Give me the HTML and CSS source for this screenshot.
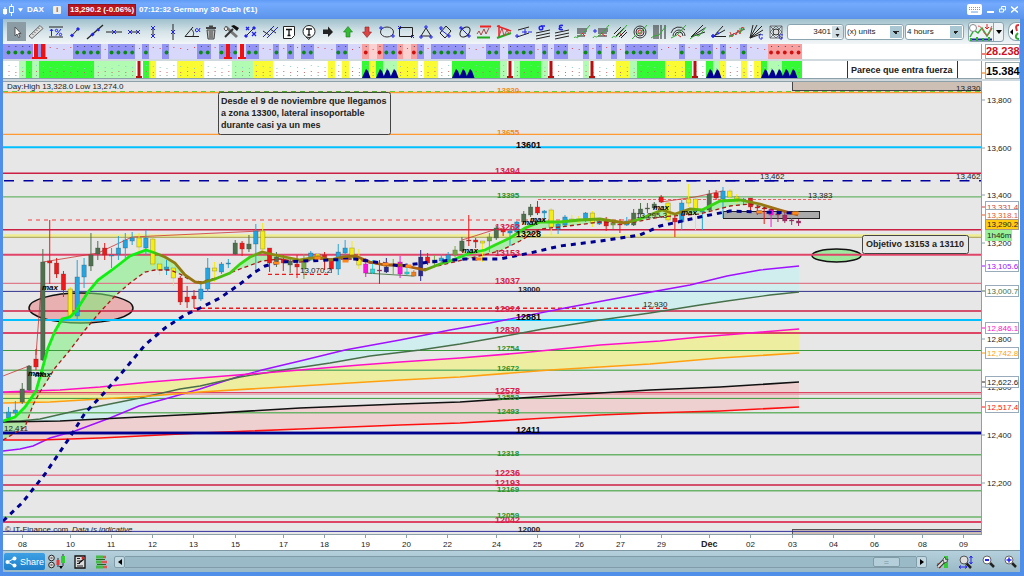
FILE: index.html
```html
<!DOCTYPE html>
<html lang="en">
<head>
<meta charset="utf-8">
<title>DAX - Germany 30 Cash</title>
<link rel="stylesheet" href="styles.css">
</head>
<body>
<header class="titlebar">
  <svg class="logo" viewBox="0 0 12 14"><path d="M2 4v8M8.500 1v12" stroke="#fff"/><path d="M0 6h4v5H0z" fill="#fff"/><path d="M6.500 3.500h4v6h-4z" fill="#5f9af2" stroke="#fff"/></svg>
  <svg class="caret" viewBox="0 0 6 4"><path d="M0 0h6L3 4z" fill="#fff"/></svg>
  <b class="symbol">DAX</b>
  <button class="info" aria-label="Information">i</button>
  <b class="quote">13,290.2 (-0.06%)</b>
  <b class="clock">07:12:32 Germany 30 Cash (€1)</b>
  <div class="window-buttons">
    <button aria-label="Keyboard"><svg width="15" height="11" viewBox="0 0 15 11"><rect width="15" height="11" rx="2" fill="#fff"/><path d="M2 3.500h11M2 5.500h11" stroke="#6a9ce8" stroke-dasharray="1 1"/><path d="M4 8h7" stroke="#6a9ce8"/></svg></button>
    <button aria-label="Minimise"><svg width="7" height="9" viewBox="0 0 7 9"><path d="M0 7h7" stroke="#fff" stroke-width="2"/></svg></button>
    <button aria-label="Restore"><svg width="7" height="9" viewBox="0 0 7 9"><path d="M.5 4h4v3h-4zM2.500 4V1.500h4V5h-2" fill="none" stroke="#fff"/></svg></button>
    <button aria-label="Close"><svg width="7" height="9" viewBox="0 0 7 9"><path d="M0 1.500l7 6M7 1.500l-7 6" stroke="#fff" stroke-width="1.500"/></svg></button>
  </div>
</header>

<div class="toolbar">
  <div class="tools">
    <button class="active" aria-label="Pointer"><svg viewBox="0 0 18 16"><path d="M7 3v9l2-2 1.500 3.500 1.500-.7L10.500 9.500H13z" fill="#fff" stroke="#555"/></svg></button>
    <button aria-label="Ruler"><svg viewBox="0 0 18 16"><path d="M2 12L13 1.500l3 3L5 14.500z" fill="#ddd" stroke="#666"/><path d="M5 9.500l1.500 1.500M7 7.500L8.500 9M9 5.500l1.500 1.500M11 3.500L12.500 5" stroke="#666"/></svg></button>
    <button aria-label="Percent"><svg viewBox="0 0 18 16"><path d="M2 3h14M2 13h14" stroke="#222"/><path d="M4.500 12V5M3 7l1.500-2L6 7M9 11.500L14 5" stroke="#22e" fill="none"/><circle cx="9.500" cy="6.500" r="1.200" fill="none" stroke="#22e"/><circle cx="13.500" cy="10.500" r="1.200" fill="none" stroke="#22e"/></svg></button>
    <button aria-label="Segment"><svg viewBox="0 0 18 16"><path d="M6 11.500L12 5" stroke="#222"/><path d="M5 12.500l2-2M11 6l2-2" stroke="#22e" stroke-width="3"/></svg></button>
    <button aria-label="Line"><svg viewBox="0 0 18 16"><path d="M1 15L17 1" stroke="#222" stroke-width="1.300"/><path d="M5.500 11.500l2-2M11.500 6.500l1.500-1.500" stroke="#22e" stroke-width="3"/></svg></button>
    <button aria-label="Horizontal line"><svg viewBox="0 0 18 16"><path d="M1 8h16" stroke="#222"/><path d="M7 6l4 4M11 6l-4 4" stroke="#22e"/></svg></button>
    <button aria-label="Horizontal segment"><svg viewBox="0 0 18 16"><path d="M4 8h10" stroke="#222"/><path d="M3 6l4 4M7 6l-4 4M11 6l4 4M15 6l-4 4" stroke="#22e"/></svg></button>
    <button aria-label="Vertical segment"><svg viewBox="0 0 18 16"><path d="M9 3v10" stroke="#222"/><path d="M7 2l4 4M11 2L7 6M7 10l4 4M11 10l-4 4" stroke="#22e"/></svg></button>
    <button aria-label="Vertical line"><svg viewBox="0 0 18 16"><path d="M9 0v16" stroke="#222"/><path d="M7 6l4 4M11 6l-4 4" stroke="#22e"/></svg></button>
    <button aria-label="Angle"><svg viewBox="0 0 18 16"><path d="M10 3L2 12.500h14M8 5c3 2 3 5 2 7" fill="none" stroke="#222"/><path d="M17 4c-1 4-5 5-4.500 2s3-1 4.500 2" fill="none" stroke="#22e"/></svg></button>
    <button aria-label="Delete"><svg viewBox="0 0 18 16"><path d="M4 4h10M7 2.500h4" stroke="#444" stroke-width="2"/><path d="M5 6h8l-1 9H6z" fill="#bbb" stroke="#444"/><path d="M8 7v7M10 7v7" stroke="#444"/></svg></button>
    <button aria-label="Settings"><svg viewBox="0 0 18 16"><path d="M4 3l11 10" stroke="#777" stroke-width="3"/><path d="M3 13l8-8" stroke="#333" stroke-width="2"/><path d="M9 2l6 5 2-3-5-3z" fill="#111"/><path d="M2 5l2-3 2 3-2 2z" fill="#eee" stroke="#555"/></svg></button>
    <button aria-label="Half line"><svg viewBox="0 0 18 16"><path d="M4 13L14 3" stroke="#222"/><path d="M5 3l3 3M8 3L5 6M11 8l4 4M15 8l-4 4" stroke="#22e" stroke-width="1.300"/><path d="M4 13l2-2M12 5l2-2" stroke="#22e" stroke-width="3"/></svg></button>
    <button aria-label="Channel"><svg viewBox="0 0 18 16"><path d="M2 13L13 2M6 14L17 3" stroke="#22e"/><path d="M2 7l6 4M9 5l6 4" stroke="#222"/></svg></button>
    <button aria-label="Text"><svg viewBox="0 0 18 16"><path d="M3.500 2.500h11v9l-3 3h-8z" fill="#fff" stroke="#222"/><path d="M6 5.500h6M9 5.500v6M7.500 11.500h3" stroke="#111" stroke-width="1.300"/></svg></button>
    <button aria-label="Callout"><svg viewBox="0 0 18 16"><path d="M6 13l3 2.500 2-3" fill="#fff" stroke="#222"/><circle cx="9" cy="7.500" r="6" fill="#fff" stroke="#222"/><path d="M6 5h6M9 5v6M7.500 11h3" stroke="#111" stroke-width="1.300"/></svg></button>
    <button aria-label="Right arrow"><svg viewBox="0 0 18 16"><path d="M4 5.500h5v-3L14 8l-5 5v-3H4z" fill="#222"/></svg></button>
    <button aria-label="Up arrow"><svg viewBox="0 0 18 16"><path d="M9 2.500L13.500 8H11v5H7V8H4.500z" fill="#3b3" stroke="#272" stroke-width=".6"/></svg></button>
    <button aria-label="Down arrow"><svg viewBox="0 0 18 16"><path d="M9 13.500L4.500 8H7V3h4v5h2.500z" fill="#d44" stroke="#822" stroke-width=".6"/></svg></button>
    <button aria-label="Ellipse"><svg viewBox="0 0 18 16"><ellipse cx="9" cy="8" rx="6.500" ry="5" fill="none" stroke="#333"/><path d="M1 4h4M3 2v4M13 12h4M15 10v4" stroke="#22e"/></svg></button>
    <button aria-label="Rectangle"><svg viewBox="0 0 18 16"><path d="M2.500 3.500h13v9h-13z" fill="none" stroke="#222"/><path d="M1 2l3 3M4 2L1 5M14 11l3 3M17 11l-3 3" stroke="#22e"/></svg></button>
    <button aria-label="Triangle"><svg viewBox="0 0 18 16"><path d="M9 4l5 8H4z" fill="none" stroke="#222"/><path d="M9 1v4M7 3h4M2 13h4M4 11v4M12 13h4M14 11v4" stroke="#22e"/></svg></button>
    <button aria-label="Rotated rectangle"><svg viewBox="0 0 18 16"><path d="M10 2l5 5-6 7-5-5z" fill="none" stroke="#222"/><path d="M3 4h4M5 2v4M4 5l9 7M11 12h4M13 10v4" stroke="#22e"/></svg></button>
    <button aria-label="Rotated ellipse"><svg viewBox="0 0 18 16"><ellipse cx="9" cy="8" rx="6" ry="4" transform="rotate(-45 9 8)" fill="none" stroke="#222"/><path d="M3 4h4M5 2v4M4 3l9 9M11 12h4M13 10v4" stroke="#22e"/></svg></button>
    <button aria-label="Support and resistance"><svg viewBox="0 0 18 16"><path d="M5 2.500h11" stroke="#e22" stroke-width="2"/><path d="M2 13.500h13" stroke="#2a2" stroke-width="2"/><path d="M2 10l2-3 2 4 3-6 2 5 3-6" fill="none" stroke="#a44"/></svg></button>
    <button aria-label="Wedge"><svg viewBox="0 0 18 16"><path d="M2 2l14 5M4 1v13" stroke="#e22" stroke-width="1.500"/><path d="M2 14l14-5" stroke="#2a2" stroke-width="2"/><path d="M4 12l3-8 2 8 3-6 2 4" fill="none" stroke="#c44"/></svg></button>
    <button aria-label="Parallel"><svg viewBox="0 0 18 16"><path d="M4 6l11-3M3 13l12-4" stroke="#222"/><path d="M1 12h4M3 10v4M8 8h5M11 5v6M14 8h4" stroke="#22e"/></svg></button>
    <button aria-label="Standard deviation"><svg viewBox="0 0 18 16"><path d="M2 9l14-3M2 12l14-3M2 15l14-3" stroke="#222"/><circle cx="7" cy="4" r="1.800" fill="none" stroke="#22e" stroke-width="1.500"/><path d="M7 2h4" stroke="#22e" stroke-width="1.500"/></svg></button>
    <button aria-label="Standard error"><svg viewBox="0 0 18 16"><path d="M2 9l14-3M2 12l14-3M2 15l14-3" stroke="#222"/><path d="M10 1.500c-5-1-4 2-1 2-4 0-4 3 1 2" fill="none" stroke="#22e" stroke-width="1.500"/></svg></button>
    <button aria-label="Retracement"><svg viewBox="0 0 18 16"><path d="M4 5h10M4 7h10M4 9h9M4 12h8" stroke="#222"/><path d="M1 14c2-3 3 2 5-2l3-2 3-3 5-6" fill="none" stroke="#3a3"/><path d="M9 9l3 3" stroke="#d22"/></svg></button>
    <button aria-label="Projection"><svg viewBox="0 0 18 16"><path d="M6 5h10M6 7h10M6 9h9M6 12h9" stroke="#222"/><path d="M1 14c2-4 3 1 5-2l3-2 3-3 5-6" fill="none" stroke="#3a3"/><path d="M1 7h4M3 5v4" stroke="#22e"/><path d="M9 9l4 3" stroke="#d22"/></svg></button>
    <button aria-label="Fibonacci channel"><svg viewBox="0 0 18 16"><path d="M3 10l7-7M5 12l8-8M8 13l7-7M10 14l6-6" stroke="#222"/><path d="M1 14c2-4 3 1 5-2l4-4 6-7" fill="none" stroke="#3a3"/><path d="M8 8l3 4" stroke="#d22"/></svg></button>
    <button aria-label="Fibonacci circles"><svg viewBox="0 0 18 16"><circle cx="9" cy="8" r="6" fill="none" stroke="#333"/><circle cx="9" cy="8" r="4" fill="none" stroke="#333"/><circle cx="9" cy="8" r="2" fill="none" stroke="#d22"/><path d="M1 15l4-4 5-3 6-7" fill="none" stroke="#3a3"/></svg></button>
    <button aria-label="Time zones"><svg viewBox="0 0 18 16"><path d="M4 1v14M6 1v14M8 1v14M11 1v14M15 1v14" stroke="#222"/><path d="M1 14l3-2 5-1 7-9" fill="none" stroke="#3a3"/></svg></button>
    <button aria-label="Fibonacci arcs"><svg viewBox="0 0 18 16"><path d="M3 12a6 6 0 0 1 12 0M5 12a4 4 0 0 1 8 0M1 9a8 8 0 0 1 14-3" fill="none" stroke="#333"/><path d="M1 14l6-3 9-10" fill="none" stroke="#3a3"/><path d="M8 11l3 2" stroke="#d22"/></svg></button>
    <button aria-label="Fibonacci fan"><svg viewBox="0 0 18 16"><path d="M2 13L14 1M2 13L16 4M2 13l14-5" stroke="#222"/><path d="M1 15l5-4 4 1 7-9" fill="none" stroke="#3a3"/></svg></button>
    <button aria-label="Speed lines"><svg viewBox="0 0 18 16"><path d="M5 12L14 2M5 12l11-6M3 12.500h14" stroke="#222"/><path d="M2 12h4M4 10v4M8 8l2 2" stroke="#22e" stroke-width="1.500"/></svg></button>
    <button aria-label="Waves"><svg viewBox="0 0 18 16"><path d="M1 12l16-7" stroke="#555"/><path d="M2 8l2 5 2-4 2 2 2-5 2 4 2-7 2 2" fill="none" stroke="#d33"/><path d="M1 13l5-2M12 4v5l4-6" fill="none" stroke="#3a3"/></svg></button>
    <button aria-label="Gann fan"><svg viewBox="0 0 18 16"><path d="M2 14L5 1M2 14L9 1M2 14L14 2M2 14l13-8M2 14l11-4" stroke="#222"/><path d="M15 11c-5-2-5 5-1 4v-2" fill="none" stroke="#22e"/></svg></button>
    <button aria-label="Gann square"><svg viewBox="0 0 18 16"><path d="M3 2h12v12H3zM3 2l12 12M15 2L3 14M9 2l6 6-6 6-6-6z" fill="none" stroke="#555" stroke-width=".8"/><circle cx="9" cy="8" r="3" fill="#ddd" stroke="#333"/><path d="M16 11c-5-2-5 5-1 4v-2" fill="none" stroke="#22e"/></svg></button>
  </div>
  <div class="spin"><input type="text" value="3401" aria-label="Number of units"><svg viewBox="0 0 6 12"><path d="M1 4h4L3 1zM1 8h4L3 11z" fill="#222"/></svg></div>
  <select aria-label="Units"><option>(x) units</option></select>
  <select aria-label="Timeframe"><option>4 hours</option></select>
  <div class="split">
    <button aria-label="Indicators"><svg width="24" height="18" viewBox="0 0 24 18"><path d="M1 14l4-7 4 3 4-5 5 8 5-8" fill="none" stroke="#3a3" stroke-width="1.500"/><path d="M9 3c5 0 5 9 9 9 3 0 3-7 5-9" fill="none" stroke="#d55"/><circle cx="4" cy="5" r="3.500" fill="#fff" stroke="#888"/><path d="M18 1v4M16 4l2 2 2-2" stroke="#d22" fill="none"/><path d="M1 16.500h22" stroke="#22a" stroke-width="2"/><path d="M2 15v3M8 14v4M14 15v3M20 14v4" stroke="#2b2" stroke-width="2"/></svg></button>
    <button class="drop" aria-label="More indicators"><svg width="6" height="4" viewBox="0 0 6 4"><path d="M0 0h6L3 4z"/></svg></button>
  </div>
  <button class="round" aria-label="Orders"><svg width="10" height="18" viewBox="0 0 10 18"><path d="M3 6L0 9l3 3z"/><path d="M9 2C5 2 6 5 7 8" fill="none" stroke="#d33" stroke-width="2"/><path d="M9 16c-4 0-4-3-1-6" fill="none" stroke="#3a3" stroke-width="2"/></svg></button>
</div>

<main class="panels">
  <svg id="strip-a" viewBox="3 44 1017 15" role="img" aria-label="Trend strip"></svg>
  <svg id="strip-b" viewBox="3 61 1017 18" role="img" aria-label="Strength strip"></svg>
  <svg id="chart" viewBox="3 81 1017 469" role="img" aria-label="DAX price chart"></svg>
</main>

<footer class="bottombar">
  <button class="share"><svg width="12" height="12" viewBox="0 0 12 12"><path d="M10 2L2.500 6 10 10" fill="none" stroke="#fff"/><circle cx="2.500" cy="6" r="2" fill="#fff"/><circle cx="9.500" cy="2.500" r="2" fill="#fff"/><circle cx="9.500" cy="9.500" r="2" fill="#fff"/></svg>Share</button>
  <button class="bare" aria-label="Chart style"><svg width="17" height="15" viewBox="0 0 17 15"><circle cx="3.500" cy="4" r="2.800" fill="#ddd" stroke="#222"/><circle cx="3.500" cy="11" r="2.800" fill="#ddd" stroke="#222"/><path d="M2.500 4h2M2.500 11h2" stroke="#222"/><path d="M10 4v9M15 0v12" stroke="#333"/><path d="M8.500 6h3v5h-3z" fill="#e33"/><path d="M13 2h4v7h-4z" fill="#3c3"/><path d="M11 12h4l-2 3z"/></svg></button>
  <button class="bare" aria-label="Report"><svg width="12" height="14" viewBox="0 0 12 14"><path d="M1 1h10v12H1z" fill="#ddd" stroke="#111" stroke-width="1.300"/><path d="M3 3.500h3M3 6h5M3 8.500h3M3 11h6" stroke="#222"/><path d="M5 8l5-4" stroke="#111" stroke-width="1.500"/><circle cx="9" cy="3" r="1.500" fill="#d22"/></svg></button>
  <button class="bare" aria-label="Order book"><svg width="13" height="14" viewBox="0 0 13 14"><path d="M1 2h7M1 7h6M1 12h7" stroke="#4b4" stroke-width="3"/><path d="M8 2h3M7 7h5M8 12h4" stroke="#d55" stroke-width="2.500"/><path d="M1 4.500h9M2 9.500h9" stroke="#262"/></svg></button>
  <div class="scroll">
    <button aria-label="Scroll left"><svg width="4" height="6" viewBox="0 0 4 6"><path d="M4 0v6L0 3z"/></svg></button>
    <div class="track"><div class="thumb">=</div></div>
    <button aria-label="Scroll right"><svg width="4" height="6" viewBox="0 0 4 6"><path d="M0 0v6l4-3z"/></svg></button>
  </div>
  <button class="bare" aria-label="Chart settings"><svg width="13" height="14" viewBox="0 0 13 14"><path d="M8 1h4v12H8z" fill="#3c3"/><path d="M1 8h4v5H1z" fill="#d66"/><path d="M2 12l6-6" stroke="#333" stroke-width="4"/><path d="M2 12l6-6" stroke="#ddd" stroke-width="2"/><path d="M7 4l2-2 1 3 2-1-1 3-3 1z" fill="#ddd" stroke="#333" stroke-width=".7"/></svg></button>
  <button class="bare" aria-label="Fit zoom"><svg width="15" height="14" viewBox="0 0 15 14"><path d="M8 8l5 5" stroke="#222" stroke-width="2.500"/><circle cx="6" cy="5" r="4" fill="#ddd" stroke="#555"/><path d="M13 1v8M11.500 3L13 1l1.500 2M11.500 7L13 9l1.500-2M1 12h8M3 10.500L1 12l2 1.500M7 10.500L9 12l-2 1.500" fill="none" stroke="#22e"/></svg></button>
  <button class="bare" aria-label="Zoom out"><svg width="13" height="13" viewBox="0 0 13 13"><path d="M8 8l4 4" stroke="#222" stroke-width="2.500"/><circle cx="5" cy="5" r="4" fill="#fff" stroke="#666"/><path d="M3 5h4" stroke="#22e" stroke-width="2"/></svg></button>
  <button class="bare" aria-label="Zoom in"><svg width="13" height="13" viewBox="0 0 13 13"><path d="M8 8l4 4" stroke="#222" stroke-width="2.500"/><circle cx="5" cy="5" r="4" fill="#fff" stroke="#666"/><path d="M2.500 5h5M5 2.500v5" stroke="#22e" stroke-width="1.500"/></svg></button>
</footer>
<script src="chart.js"></script>
</body>
</html>
```

FILE: styles.css
```css
* { box-sizing: border-box; }

body {
  margin: 0;
  height: 100vh;
  padding: 0 4px 4px 3px;
  display: flex;
  flex-direction: column;
  overflow: hidden;
  background: #4f8fea;
  font-family: "Liberation Sans", Arial, sans-serif;
  font-size: 9px;
  color: #222;
}

button {
  padding: 0;
  border: 0;
  background: none;
  font: inherit;
  display: flex;
  align-items: center;
  justify-content: center;
}

.titlebar {
  flex: none;
  height: 19px;
  display: flex;
  align-items: center;
  background: linear-gradient(#5f9bf5, #74aafd 20%, #5a94ea);
  margin: 0 -4px 0 -3px;
  padding: 0 6px 0 3px;
  color: #fff;
  font-size: 8px;
}
.logo { width: 12px; height: 14px; }
.caret { width: 5px; height: 4px; margin: 0 4px 0 3px; }
.symbol { width: 26px; }
.info {
  width: 8px;
  height: 8px;
  border-radius: 1px;
  background: #eee;
  color: #667;
  font-weight: bold;
  margin-right: 7px;
}
.quote {
  background: #bb1620;
  border: 1px solid #8f1420;
  line-height: 10px;
  padding: 0 1px;
  margin-right: 3px;
  white-space: nowrap;
}
.clock { flex: 1; white-space: nowrap; }
.window-buttons { display: flex; gap: 5px; }

.toolbar {
  flex: none;
  height: 25px;
  display: flex;
  align-items: center;
  gap: 1px;
  padding-left: 4px;
  background: linear-gradient(#9fbfcc, #d4e3e8 50%, #f2f6f7);
}
.tools {
  flex: 1;
  min-width: 0;
  display: grid;
  grid-template-columns: repeat(40, minmax(0, 1fr));
}
.tools button { height: 19px; }
.tools svg { width: 18px; height: 16px; }
.tools .active { background: #8b9ca5; }

.spin {
  width: 57px;
  height: 16px;
  display: flex;
  align-items: center;
  background: #fff;
  border: 1px solid #8aa5b0;
  border-radius: 3px;
}
.spin input {
  width: 43px;
  border: 0;
  padding: 0;
  background: none;
  text-align: right;
  font: inherit;
  font-size: 8px;
  color: #222;
}
.spin svg { width: 11px; height: 12px; background: #cfdde3; margin-left: 1px; }

.toolbar select {
  width: 59px;
  height: 16px;
  padding: 0 0 0 1px;
  appearance: none;
  font: inherit;
  font-size: 8px;
  color: #222;
  border: 1px solid #8aa5b0;
  border-radius: 3px;
  background:
    linear-gradient(to bottom left, #222 50%, transparent 50%) right 7px top 6px / 3px 3px no-repeat,
    linear-gradient(to bottom right, #222 50%, transparent 50%) right 4px top 6px / 3px 3px no-repeat,
    linear-gradient(#a9c6d3, #a9c6d3) right 1px top 1px / 12px 12px no-repeat,
    #fff;
}
.split {
  display: flex;
  height: 20px;
  margin: 0 3px;
  background: #eef4f6;
  border: 1px solid #8aa5b0;
  border-radius: 3px;
}
.split .drop { width: 10px; border-left: 1px solid #8aa5b0; }
.round {
  width: 12px;
  height: 19px;
  background: #fff;
  border: 1px solid #8aa5b0;
  border-right: 0;
  border-radius: 8px 0 0 8px;
}

.panels {
  flex: 1;
  min-height: 0;
  display: flex;
  flex-direction: column;
  gap: 2px;
  background: #cfd9de;
}
.panels svg { display: block; width: 100%; background: #fff; }
#strip-a, #strip-b { flex: none; }
#chart { flex: 1; min-height: 0; }

.panels text { font-size: 8px; fill: #222; }
.panels .bold { font-size: 9px; font-weight: bold; }
.panels .small-bold { font-weight: bold; }
.panels .value { font-size: 11px; font-weight: bold; }
.panels .max { font-weight: bold; font-style: italic; fill: #000; }
.panels .italic { font-style: italic; }

.bottombar {
  flex: none;
  height: 22px;
  display: flex;
  align-items: center;
  gap: 9px;
  padding: 0 3px 0 1px;
  border-top: 1px solid #7f97a1;
  background: linear-gradient(#b5d0dc, #9ab9c6);
}
.share {
  width: 41px;
  height: 17px;
  gap: 3px;
  color: #fff;
  background: linear-gradient(#3da0e4, #1f7fc9);
  border-radius: 2px;
  margin-right: -6px;
}
.scroll { flex: 1; display: flex; align-items: center; height: 12px; margin: 0 -3px; }
.scroll button {
  width: 11px;
  height: 12px;
  background: #c3d9e2;
  border: 1px solid #809ca8;
  border-radius: 2px;
}
.track {
  flex: 1;
  height: 12px;
  padding-right: 16px;
  display: flex;
  justify-content: flex-end;
  background: #9bbac7;
  border: solid #809ca8;
  border-width: 1px 0;
}
.thumb {
  width: 27px;
  line-height: 9px;
  text-align: center;
  color: #7793a0;
  background: #b4cfda;
  border: 1px solid #809ca8;
  border-radius: 2px;
}
.scroll + .bare { margin-left: 3px; }
```

FILE: chart.js
```js
const stripA = [], stripB = [], chart = [];
const STEP = 6.87, FIRST = 8.5;

const rect = (x, y, w, h, fill, extra = "") =>
  `<rect x="${x}" y="${y}" width="${w}" height="${h}" fill="${fill}" ${extra}/>`;
const line = (x1, y1, x2, y2, stroke, w = 1, dash = "") =>
  `<line x1="${x1}" y1="${y1}" x2="${x2}" y2="${y2}" stroke="${stroke}" stroke-width="${w}" stroke-dasharray="${dash}"/>`;
const text = (x, y, s, cls = "", fill = "") =>
  `<text x="${x}" y="${y}" class="${cls}"${fill ? ` style="fill:${fill}"` : ""}>${s}</text>`;
const poly = (pts, stroke, w, dash = "") =>
  `<polyline points="${pts}" fill="none" stroke="${stroke}" stroke-width="${w}" stroke-dasharray="${dash}"/>`;
const band = (a, b, fill) =>
  `<polygon points="${a} ${b.split(" ").reverse().join(" ")}" fill="${fill}"/>`;

// Trend strip: D strong, P falling, L weak falling; the rest is neutral.
const trend = `3-33D 38-46D 73-101D 108-135D 142-149D 162-169D 197-211D 219-237D 246-259D 273-279D 287-294D 301-314D 336-348D
362-369P 369-377L 377-383P 383-397D 397-403P 403-411L 411-417P 417-424D 431-466D 486-500D 508-535D 542-548D 554-568D 583-589D
596-602D 611-617D 625-658D 679-685D 700-713D 720-726D 740-747D 768-802P`.split(/\s+/);
stripA.push(rect(3, 44, 799, 15, "#d8d8fb"));
const trendCells = trend.map(c => { const [, a, b, t] = c.match(/(\d+)-(\d+)(\w)/); return [+a, +b, t]; });
for (const [a, b, t] of trendCells) {
  stripA.push(rect(a, 44, b - a, 15, { D: "#9494f5", P: "#f8a0a0", L: "#fbd0d0" }[t]));
}
for (let i = 0; i < 116; i++) {
  const x = FIRST + STEP * i;
  const cell = trendCells.find(c => x >= c[0] && x <= c[1]);
  if (cell && cell[2] !== "L") {
    stripA.push(`<circle cx="${x}" cy="52.500" r="1.900" fill="${cell[2] === "D" ? "#0a8a14" : "#d01010"}"/>`);
    stripA.push(rect(x, 46, 1, 1, "#445"));
  } else {
    stripA.push(rect(x, 47 + i % 3, 1, 1, "#e04050"));
  }
}
for (const x of [36, 43, 228, 242]) {
  stripA.push(rect(x - 2, 44, 4, 14, "#f01010"), rect(x - 4, 57, 8, 2, "#f01010"));
}
stripA.push(rect(981, 44, 1, 15, "#8ca0aa"), line(982, 54, 985, 54, "#d00"),
  rect(985.5, 44.5, 34, 14, "#fff", 'stroke="#9aa"'), text(986, 55, "28.238", "value", "#d01020"));

// Strength strip: G strong, S soft green, Y yellow.
const strength = `19-26S 26-32G 32-39S 39-94G 94-136S 143-149G 149-156Y 177-204Y 232-253S 253-273Y 328-335Y 342-349Y 362-369G
369-376Y 376-383G 383-397S 397-418Y 424-438Y 452-500G 500-507S 514-520S 520-541G 541-548S 583-589S 616-630Y 630-637S 637-665G
665-685Y 685-692G 706-713G 713-720S 720-726Y 741-747Y 754-761Y 761-767G 767-782S 782-802G`.split(/\s+/);
for (const c of strength) {
  const [, a, b, t] = c.match(/(\d+)-(\d+)(\w)/);
  stripB.push(rect(a, 61, b - a, 17, { G: "#33fa33", S: "#b2fbb2", Y: "#fbfb33" }[t]));
}
for (let i = 0; i < 116; i++) {
  const x = FIRST + STEP * i;
  stripB.push(rect(x, 65 + i % 4, 1, 1, "#8cc"), rect(x, 71 + i % 2, 1, 1, "#c66"), rect(x, 75, 1, 1, "#8a8"));
}
for (const [x, n] of [[362, 1], [376, 3], [452, 3], [706, 2], [761, 5]]) {
  for (let k = 0; k < n; k++) {
    const l = x + k * 7;
    stripB.push(`<path d="M${l} 78l4-9 2 2 2.500 7z" fill="#000090"/>`);
  }
}
for (const x of [139, 510, 551, 592, 695]) {
  stripB.push(rect(x - 1.5, 61, 3, 16, "#b81010"), rect(x - 3, 76, 6, 2, "#b81010"));
}
stripB.push(rect(3, 78, 979, 1, "#8ca0aa"), line(847.5, 61, 847.5, 78, "#333"), line(957.5, 61, 957.5, 78, "#333"),
  text(851, 73, "Parece que entra fuerza", "bold"), rect(981, 61, 1, 17, "#8ca0aa"),
  line(982, 73, 985, 73, "#e70"), rect(985.5, 62.5, 34, 16, "#fff", 'stroke="#9aa"'), text(986, 75, "15.384", "value", "#000"));

// Chart background and future zones
chart.push(rect(3, 81, 978, 453, "#e7e7e7"));
chart.push(rect(792.5, 80.5, 189, 10, "#cdbfb3", 'stroke="#444"'), rect(792.5, 529.5, 189, 5, "#cdbfb3", 'stroke="#555"'));

const purple = "3,451 20,449 33,446 50,438 75,431 110,418 139,406 165,399 200,389 240,376 262,370 300,361 345,350 400,340 450,330 490,323 565,308 640,294 690,285 727,276 760,270 799,266";
const forest = "3,421 20,421 40,419 75,411 100,406 140,398 180,389 200,386 240,377 283,370 330,363 370,356 420,350 460,344 500,337 543,329 600,320 650,313 700,305 727,301 770,295 799,292";
const magenta = "3,392 60,390 100,387 150,382 200,378 250,374 300,370 360,365 400,362 460,358 520,353 600,345 660,341 700,337 750,333 799,329";
const orange = "3,403 50,402 100,399 150,396 200,392 300,386 400,380 460,377 550,370 650,364 720,358 799,353";
const black = "3,422 60,421 120,418 200,414 300,408 400,404 460,402 520,398 600,393 650,390 720,387 799,382";
const red = "3,440 40,440 100,438 200,433 300,429 400,425 460,423 600,415 650,413 720,411 799,407";
const fast = "3,421 15,417 25,407 36,391 42,370 48,348 55,331 62,319 70,317 76,311 88,292 98,280 112,270 130,256 146,250 155,253 165,257 175,263 185,275 195,282 201,283 215,279 230,273 240,264 250,257 262,252 275,255 290,258 300,260 318,257 330,260 343,257 355,256 370,262 385,265 400,265 415,268 425,270 440,264 450,261 470,253 485,250 495,245 510,238 525,228 540,222 560,222 580,220 600,219 625,223 640,219 662,210 675,214 690,209 702,210 720,201 740,200 760,204 780,210 798,215";
const slow = "3,440 25,427 33,405 40,392 55,368 70,350 85,330 100,312 115,296 130,283 145,272 155,270 170,270 180,274 190,280 201,282 220,277 240,269 262,261 280,259 300,262 320,259 355,259 370,263 400,266 425,269 450,263 500,251 520,241 540,229 560,227 600,222 630,223 660,217 700,214 730,206 750,204 770,209 798,215";
const trail = "3,521 22,503 45,474 70,437 85,413 105,392 120,375 130,363 145,345 165,328 185,315 200,308 220,298 240,284 255,272 265,266 280,262 330,260 355,259 400,266 430,262 465,259 500,259 530,253 560,246 600,241 640,235 660,226 700,217 730,211 760,212 796,213";

chart.push(band(purple, forest, "#cfeeed"), band(magenta, orange, "#eeeea0"), band(black, red, "#efd0d0"));
chart.push(rect(723.5, 211.5, 96, 7, "#aaa", 'stroke="#222"'));
chart.push(`<ellipse cx="81" cy="308" rx="52" ry="15" fill="#e8b0b0" stroke="#111" stroke-width="1.500"/>`);
chart.push(`<g opacity=".55">${band(fast, slow, "#7cf07c")}</g>`);
chart.push(`<ellipse cx="836.500" cy="255.500" rx="24.500" ry="6.500" fill="#a0e8a0" stroke="#111" stroke-width="1.500"/>`);

const levels = [
  [92.5, "#f93", 1.5], [134.3, "#f93", 1.3], [147.3, "#00bfff", 2], [173.3, "#cc1f44", 1.5], [196.8, "#6ab46a", 1.3],
  [229.7, "#cc1f44", 1.5], [235.5, "#eeee90", 2.5], [237.3, "#a8a048", 1], [254.8, "#e04468", 2], [283.3, "#de7c8c", 1.3],
  [291.4, "#33338f", 1], [311, "#cc1f44", 1.4], [320, "#00bfff", 2.2], [333, "#dd4466", 2], [350.5, "#3a9a3a", 1],
  [370.2, "#6ab46a", 1.4], [392.5, "#e04464", 1.2], [394, "#de7c8c", 1.2], [398.4, "#3a9a3a", 1], [412.7, "#6ab46a", 1.4],
  [433, "#00008f", 2.3], [454.8, "#6ab46a", 1.4], [475.2, "#e27c90", 1.4], [485, "#cc1f44", 1.4], [490.8, "#6ab46a", 1.4],
  [517, "#6ab46a", 1.4], [522, "#dd4466", 2], [531.4, "#33339f", 1]
];
for (const [y, color, w] of levels) chart.push(line(3, y, 981, y, color, w));
chart.push(line(3, 91.5, 981, 91.5, "#6c3", 1, "5 4"));
chart.push(line(4, 180.8, 981, 180.8, "#0000a0", 1.5, "10 9.500"), line(355, 180.8, 787, 180.8, "#0000a0", 1.5, "14 5.500"));
chart.push(line(28, 220, 640, 220, "#f43c3c", 1.2, "4 4"), line(538, 199.5, 833, 199.5, "#f46060", 1, "3 2"));
chart.push(line(194, 308.3, 668, 308.3, "#f01818", 1.6, "4 3"), line(268, 274.4, 331, 274.4, "#f01818", 1.3, "4 3"));

chart.push(poly(purple, "#a010ff", 1.4), poly(forest, "#47704a", 1.4), poly(magenta, "#ff10c8", 1.6),
  poly(orange, "#ffa010", 1.6), poly(black, "#111", 1.6), poly(red, "#ff1010", 1.6));
chart.push(line(3, 433, 981, 433, "#00008f", 2.3));
chart.push(poly("3,376 29,366", "#c33", 0.8), poly("36,355 43,262 98,253 132,237 260,231", "#c33", 0.8),
  poly("462,240 500,228", "#c33", 0.8), poly("661,202 695,197 723,191", "#c33", 0.8), poly("365,273 413,276", "#363", 0.8));

// Candles: high, body top, body bottom, low, colour key
const colors = { b: "#22a5e0", g: "#4f704f", r: "#f01818", y: "#f5ee10", l: "#77a844", m: "#ff10e0", n: "#282890", c: "#20dddd", w: "#b02868", o: "#f08020" };
const candles = `407,412,418,420,b 401,410,413,417,b 383,389,402,404,g 365,366,390,391,g 349,359,367,370,r 249,262,360,361,g
220,261,263,284,r 258,263,274,278,r 271,274,290,297,r 287,289,316,317,y 260,277,316,320,b 258,265,277,288,b 233,255,266,271,g
241,248,254,260,g 243,248,255,260,r 248,255,256,268,b 236,248,254,260,b 233,240,248,258,b 232,238,241,245,b 233,238,247,252,y
230,238,248,255,b 238,239,264,266,y 259,264,270,275,y 260,267,270,275,b 262,268,278,286,y 276,278,302,305,r 286,297,302,308,r
290,296,299,308,r 283,289,299,301,b 258,268,289,292,b 262,268,271,282,y 262,264,272,274,b 259,263,264,268,b 240,243,254,255,g
241,243,249,256,r 235,244,249,252,g 224,231,244,273,b 223,231,249,251,y 248,248,263,272,r 252,257,262,267,g 255,259,263,271,r
257,261,265,273,g 255,264,267,278,r 254,261,269,279,l 251,253,259,261,b 253,254,256,260,y 252,255,259,270,r 258,260,269,273,r
244,252,269,275,b 240,248,253,257,b 241,248,255,258,y 249,257,265,269,y 258,264,273,277,m 260,269,273,274,c 260,270,271,284,w
258,267,272,273,n 259,264,266,274,l 256,262,274,278,m 268,272,274,275,c 270,272,276,277,o 250,257,276,281,n 253,257,263,265,r
255,260,263,265,l 254,258,261,263,b 252,255,260,262,b 246,250,255,257,l 237,241,251,252,g 215,240,241,246,r 238,240,242,248,r
241,241,243,262,y 233,237,241,252,l 226,228,238,240,g 227,229,232,236,r 228,231,233,246,b 221,222,232,234,b 211,214,222,224,g
204,207,215,217,g 201,207,213,215,r 210,211,213,220,b 208,210,227,235,y 221,224,229,234,b 215,217,225,227,b 215,219,220,224,y
216,219,220,223,y 212,213,219,222,b 211,213,223,227,y 218,221,224,225,b 217,220,226,231,r 221,223,225,229,l 219,224,225,233,r
217,221,225,226,b 209,213,225,226,g 203,209,214,220,g 203,208,209,213,g 202,204,208,209,g 195,197,202,203,r 202,203,220,222,y
216,218,222,237,r 200,203,222,230,b 184,199,203,207,y 198,199,210,230,y 210,211,212,230,b 190,194,210,211,g 190,193,198,200,r
187,191,199,218,b 189,191,197,200,y 194,197,199,203,y 198,199,201,204,b 198,198,207,211,r 206,207,208,215,r 205,208,209,224,r
206,209,215,227,m 211,214,215,222,w 212,215,221,223,w 218,220,221,225,w 219,221,223,226,w`.split(/\s+/);
candles.forEach((c, i) => {
  const [hi, top, bottom, lo, key] = c.split(",");
  const x = FIRST + STEP * i, h = Math.max(bottom - top, 1);
  chart.push(line(x, hi, x, lo, colors[key], 1));
  chart.push(rect(x - 2.2, top, 4.4, h, colors[key], 'stroke="#333" stroke-opacity=".35" stroke-width=".7"'));
});

// Moving averages; the fast one changes colour with its slope.
const stops = [[3, "#10f010"], [150, "#10f010"], [162, "#8a8010"], [200, "#987010"], [215, "#50b010"], [245, "#30e010"], [262, "#888810"],
  [300, "#909010"], [370, "#a06010"], [420, "#b06010"], [430, "#60a010"], [455, "#20e818"], [560, "#40d010"], [600, "#70a010"], [625, "#a07010"],
  [640, "#40d010"], [670, "#988010"], [688, "#888810"], [705, "#30e010"], [735, "#40c810"], [755, "#908010"], [798, "#b05818"]];
chart.push(`<defs><linearGradient id="slope" gradientUnits="userSpaceOnUse" x1="3" y1="0" x2="798" y2="0">${
  stops.map(([x, c]) => `<stop offset="${(x - 3) / 795}" stop-color="${c}"/>`).join("")}</linearGradient></defs>`);
chart.push(poly(slow, "#a81818", 1.3, "4 3"), poly(fast, "url(#slope)", 2.8), poly(trail, "#000090", 3, "5 5"));
for (const [x, y] of [[276, 263], [317, 258], [345, 261], [385, 264], [408, 266], [478, 259], [759, 212], [795, 213]]) {
  chart.push(rect(x - 2.5, y - 1.5, 6, 3, "#ff8818"));
}

// Level labels
const crimson = "#d8204a", green = "#2a8f2a";
for (const [y, s] of [[174, 13494], [230, 13262], [256, 13153], [284, 13037], [312, 12924], [333, 12830], [394, 12578], [476, 12236], [486, 12193], [523, 12042]])
  chart.push(text(495, y, s, "bold", crimson));
for (const [y, s] of [[198, 13395], [351, 12754], [371, 12672], [400, 12553], [414, 12493], [456, 12318], [492, 12169], [518, 12059]])
  chart.push(text(497, y, s, "small-bold", green));
for (const [y, s] of [[93, 13830], [135, 13655]]) chart.push(text(497, y, s, "small-bold", "#f08a20"));
for (const [y, s] of [[148, 13601], [237, 13228], [320, 12881], [433, 12411]]) chart.push(text(516, y, s, "bold", "#000"));
for (const [y, s] of [[292, 13000], [532, 12000]]) chart.push(text(518, y, s, "small-bold", "#222"));
for (const [x, y, s] of [[300, 273, "13,070.2"], [643, 307, "12,930"], [760, 179, "13,462"], [956, 179, "13,462"], [808, 198, "13,383"],
  [956, 91, "13,830"], [636, 218, "13,295.3"], [4, 431, "12,411"], [7, 89, "Day:High 13,328.0 Low 13,274.0"]])
  chart.push(text(x, y, s));
for (const [x, y] of [[42, 290], [28, 376], [35, 377], [462, 253], [522, 225], [530, 222], [653, 210], [681, 215]])
  chart.push(text(x, y, "max", "max"));
chart.push(text(5, 532, "© IT-Finance.com"), text(72, 532, "Data is indicative", "italic"));

// Notes
chart.push(rect(218.5, 92.5, 172, 42, "#e7e7e7", 'rx="2" stroke="#444"'), line(219, 92, 390, 92, "#3a7a2a", 1, "5 4"));
["Desde el 9 de noviembre que llegamos", "a zona 13300, lateral insoportable", "durante casi ya un mes"]
  .forEach((s, i) => chart.push(text(221, 104 + 12 * i, s, "bold")));
chart.push(rect(862.5, 235.5, 106, 18, "#e7e7e7", 'rx="2" stroke="#444"'), text(866, 247, "Objetivo 13153 a 13110", "bold"));

// Axes
chart.push(rect(981, 81, 39, 469, "#fff"), rect(3, 534, 1017, 16, "#fff"));
chart.push(rect(3, 81, 979, 1, "#8ca0aa"), rect(981, 81, 1, 454, "#8ca0aa"), rect(3, 534, 979, 1, "#8ca0aa"));
for (const [y, s] of [[100, "13,800"], [148, "13,600"], [195, "13,400"], [243, "13,200"], [339, "12,800"], [387, "12,600"], [435, "12,400"], [483, "12,200"]])
  chart.push(line(982, y, 985, y, "#8ca0aa"), text(987, y + 3, s));
for (const [y, s, color] of [[207, "13,331.4", "#c44"], [215, "13,318.1", "#e05a30"], [266, "13,105.6", "#a010ff"], [291, "13,000.7", "#47704a"],
  [328, "12,846.1", "#ff10c8"], [353, "12,742.8", "#ffa010"], [382, "12,622.6", "#222"], [407, "12,517.4", "#ff1010"]])
  chart.push(line(982, y, 985, y, color), rect(985.5, y - 5.5, 33, 11, "#fff", 'stroke="#9ab"'), text(987, y + 3, s, "", color));
chart.push(rect(985.5, 219.5, 33, 10, "#ffcc10", 'stroke="#a98"'), text(987, 227, "13,290.2"));
chart.push(rect(985, 230, 27, 11, "#98f098"), text(987, 238, "1h46m"));
for (const [x, s] of [[22, "08"], [70, "10"], [111, "11"], [152, "12"], [193, "13"], [235, "15"], [283, "17"], [324, "18"], [365, "19"], [406, "20"],
  [447, "22"], [496, "24"], [537, "25"], [579, "26"], [620, "27"], [661, "29"], [709, "Dec"], [750, "02"], [792, "03"], [833, "04"], [874, "06"], [922, "08"], [963, "09"]])
  chart.push(line(x + .5, 535, x + .5, 538, "#8ca0aa"), text(s === "Dec" ? x - 8 : x - 4, 547, s, s === "Dec" ? "bold" : ""));

document.getElementById("strip-a").innerHTML = stripA.join("");
document.getElementById("strip-b").innerHTML = stripB.join("");
document.getElementById("chart").innerHTML = chart.join("");
```
